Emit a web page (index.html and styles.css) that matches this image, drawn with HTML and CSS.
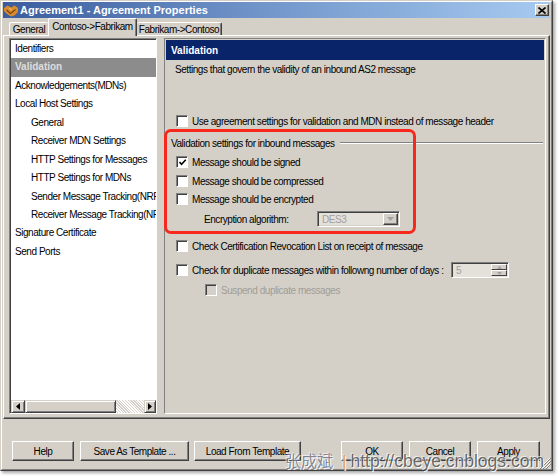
FILE: index.html
```html
<!DOCTYPE html>
<html>
<head>
<meta charset="utf-8">
<link rel="stylesheet" href="styles.css">
</head>
<body>
<div class="screen">
  <div class="window">
    <div class="frame">
      <div class="titlebar">
        <svg class="appicon" viewBox="0 0 14 13" width="14" height="13">
          <path d="M0 4 L3.5 1.5 L7 3.5 L10.5 1.5 L14 4 L14 8 L10.5 11.5 L7 12.5 L3 10 L0 7Z" fill="#d98a2c"/>
          <path d="M2.5 6 L6.5 9.5 L11.5 5.5" stroke="#7a4210" stroke-width="1.2" fill="none"/>
          <path d="M5 4 L8 6" stroke="#f6c27a" stroke-width="1" fill="none"/>
        </svg>
        <span class="title">Agreement1 - Agreement Properties</span>
        <span class="close">
          <svg viewBox="0 0 8 7" width="8" height="7"><path d="M0.5 0.5 L7.5 6.5 M7.5 0.5 L0.5 6.5" stroke="#000" stroke-width="1.6"/></svg>
        </span>
      </div>
      <div class="tabs">
        <div class="tab tab-general">General</div>
        <div class="tab tab-active">Contoso-&gt;Fabrikam</div>
        <div class="tab tab-third">Fabrikam-&gt;Contoso</div>
      </div>
      <div class="page">
        <div class="nav">
          <ul class="navlist">
            <li class="item">Identifiers</li>
            <li class="item selected">Validation</li>
            <li class="item">Acknowledgements(MDNs)</li>
            <li class="item">Local Host Settings</li>
            <li class="item sub">General</li>
            <li class="item sub">Receiver MDN Settings</li>
            <li class="item sub">HTTP Settings for Messages</li>
            <li class="item sub">HTTP Settings for MDNs</li>
            <li class="item sub">Sender Message Tracking(NRR)</li>
            <li class="item sub">Receiver Message Tracking(NRR)</li>
            <li class="item">Signature Certificate</li>
            <li class="item">Send Ports</li>
          </ul>
          <div class="hscroll">
            <span class="sbtn"><svg viewBox="0 0 4 7" width="4" height="7"><path d="M4 0 L0 3.5 L4 7Z" fill="#000"/></svg></span>
            <span class="thumb"></span>
            <span class="track"></span>
            <span class="sbtn"><svg viewBox="0 0 4 7" width="4" height="7"><path d="M0 0 L4 3.5 L0 7Z" fill="#000"/></svg></span>
          </div>
        </div>
        <div class="content">
          <div class="header">Validation</div>
          <div class="desc">Settings that govern the validity of an inbound AS2 message</div>
          <div class="row r-use"><span class="cb"></span><span>Use agreement settings for validation and MDN instead of message header</span></div>
          <div class="group"><span>Validation settings for inbound messages</span><span class="gline"></span></div>
          <div class="row r-signed"><span class="cb"><svg viewBox="0 0 9 9" width="9" height="9"><path d="M1.5 4 L3.5 6.3 L7.8 1.8" stroke="#000" stroke-width="1.6" fill="none"/></svg></span><span>Message should be signed</span></div>
          <div class="row r-comp"><span class="cb"></span><span>Message should be compressed</span></div>
          <div class="row r-enc"><span class="cb"></span><span>Message should be encrypted</span></div>
          <div class="row r-alg"><span class="alglabel">Encryption algorithm:</span>
            <span class="combo"><span class="combotext">DES3</span><span class="dbtn"><svg viewBox="0 0 7 4" width="7" height="4"><path d="M0 0 L7 0 L3.5 4Z" fill="#a0a0a0"/></svg></span></span>
          </div>
          <div class="row r-crl"><span class="cb"></span><span>Check Certification Revocation List on receipt of message</span></div>
          <div class="row r-dup"><span class="cb"></span><span class="duplabel">Check for duplicate messages within followng number of days :</span>
            <span class="spin"><span class="spintext">5</span><span class="spinbtns"><span class="sp"><svg viewBox="0 0 5 3" width="5" height="3"><path d="M0 3 L5 3 L2.5 0Z" fill="#a0a0a0"/></svg></span><span class="sp"><svg viewBox="0 0 5 3" width="5" height="3"><path d="M0 0 L5 0 L2.5 3Z" fill="#a0a0a0"/></svg></span></span></span>
          </div>
          <div class="row r-sus"><span class="cb disabled"></span><span class="distext">Suspend duplicate messages</span></div>
        </div>
      </div>
      <div class="buttons">
        <span class="btn b-help">Help</span>
        <span class="btn b-save">Save As Template ...</span>
        <span class="btn b-load">Load From Template</span>
        <span class="btn b-ok">OK</span>
        <span class="btn b-cancel">Cancel</span>
        <span class="btn b-apply">Apply</span>
      </div>
    </div>
    <svg class="grip" viewBox="0 0 12 12" width="12" height="12">
      <path d="M11 1 L1 11 M11 4 L4 11 M11 7 L7 11" stroke="#fff" stroke-width="1"/>
      <path d="M12 1 L1 12 M12 4 L4 12 M12 7 L7 12" stroke="#808080" stroke-width="1"/>
    </svg>
  </div>
  <div class="annot"></div>
  <div class="watermark"><span class="cjk">张成斌</span><span class="bar">|</span><span class="url">http://cbeye.cnblogs.com</span></div>
</div>
</body>
</html>
```

FILE: styles.css
```css
* { box-sizing: border-box; margin: 0; padding: 0; }
html, body { width: 558px; height: 476px; overflow: hidden; background: #ffffff; }
body {
  font-family: "Liberation Sans", Arial, sans-serif;
  font-size: 10px;
  letter-spacing: -0.45px;
  color: #000;
}
.screen { position: relative; width: 558px; height: 476px; }

.window {
  position: relative;
  width: 553px;
  height: 471px;
  background: #d4d0c8;
  border: 1px solid;
  border-color: #d4d0c8 #404040 #404040 #d4d0c8;
  box-shadow: 2px 2px 3px rgba(0, 0, 0, 0.35);
}
.frame {
  height: 100%;
  border: 1px solid;
  border-color: #fff #808080 #808080 #fff;
  padding: 0 1px;
  display: flex;
  flex-direction: column;
}

/* title bar */
.titlebar {
  height: 16px;
  flex: none;
  background: linear-gradient(to right, #3a5c9e 0%, #6f93c8 45%, #a6caf0 100%);
  display: flex;
  align-items: center;
  padding-left: 1px;
}
.appicon { flex: none; margin-right: 2px; }
.title {
  flex: 1;
  color: #fff;
  font-weight: bold;
  font-size: 11px;
  letter-spacing: 0;
}
.close {
  width: 14px;
  height: 12px;
  margin-right: 1px;
  background: #d4d0c8;
  border: 1px solid;
  border-color: #fff #404040 #404040 #fff;
  box-shadow: inset -1px -1px 0 #808080;
  display: flex;
  align-items: center;
  justify-content: center;
}

/* tabs */
.tabs {
  height: 17px;
  flex: none;
  display: flex;
  align-items: flex-end;
  padding-left: 6px;
  position: relative;
  z-index: 2;
}
.tab {
  height: 13px;
  display: flex;
  align-items: center;
  justify-content: center;
  white-space: nowrap;
  border-top: 1px solid #fff;
  border-left: 1px solid #fff;
  border-right: 1px solid #404040;
  box-shadow: inset -1px 0 0 #808080;
  border-radius: 2px 2px 0 0;
  background: #d4d0c8;
  padding-top: 1px;
}
.tab-general { width: 39px; border-right: none; box-shadow: none; }
.tab-active {
  width: 89px;
  height: 18px;
  margin-bottom: -1px;
  padding-bottom: 3px;
}
.tab-third { width: 85px; border-left: none; }

/* page */
.page {
  height: 384px;
  flex: none;
  border: 1px solid;
  border-color: #fff #404040 #404040 #fff;
  box-shadow: inset -1px -1px 0 #808080;
  padding: 2px 0 0 5px;
  display: flex;
  align-items: flex-start;
}

.nav {
  width: 148px;
  height: 376px;
  flex: none;
  background: #fff;
  border: 1px solid;
  border-color: #808080 #fff #fff #808080;
  box-shadow: inset 1px 1px 0 #404040;
  padding: 1px 0 0 1px;
  display: flex;
  flex-direction: column;
  overflow: hidden;
}
.navlist {
  list-style: none;
  flex: 1;
  overflow: hidden;
}
.item {
  height: 18.45px;
  line-height: 18.45px;
  padding-left: 4px;
  white-space: nowrap;
  overflow: hidden;
}
.item.sub { padding-left: 20px; }
.item.selected {
  background: #8c8c8c;
  color: #dedede;
  font-weight: bold;
  letter-spacing: 0;
}
.hscroll {
  height: 13px;
  flex: none;
  display: flex;
}
.sbtn {
  width: 14px;
  height: 13px;
  flex: none;
  background: #d4d0c8;
  border: 1px solid;
  border-color: #d4d0c8 #404040 #404040 #d4d0c8;
  box-shadow: inset 1px 1px 0 #fff, inset -1px -1px 0 #808080;
  display: flex;
  align-items: center;
  justify-content: center;
}
.sbtn:last-child { width: 12px; }
.thumb {
  width: 91px;
  flex: none;
  background: #d4d0c8;
  border: 1px solid;
  border-color: #d4d0c8 #404040 #404040 #d4d0c8;
  box-shadow: inset 1px 1px 0 #fff, inset -1px -1px 0 #808080;
}
.track {
  flex: 1;
  background-color: #ece9e2;
  background-image: repeating-linear-gradient(45deg, #fff 0 1px, #d4d0c8 1px 2px);
}

/* content */
.content {
  width: 382px;
  height: 376px;
  flex: none;
  margin-left: 7px;
  border: 1px solid;
  border-color: #808080 #fff #fff #808080;
  padding: 1px;
  position: relative;
}
.header {
  height: 20px;
  background: #0a246a;
  color: #fff;
  font-weight: bold;
  font-size: 10px;
  letter-spacing: 0;
  padding-left: 5px;
  display: flex;
  align-items: center;
}
.desc {
  margin-top: 3px;
  height: 14px;
  line-height: 14px;
  padding-left: 9px;
}
.row {
  display: flex;
  align-items: center;
  height: 18px;
  padding-left: 10px;
  white-space: nowrap;
}
.cb {
  width: 12px;
  height: 12px;
  flex: none;
  margin-right: 4px;
  background: #fff;
  border: 1px solid;
  border-color: #808080 #fff #fff #808080;
  box-shadow: inset 1px 1px 0 #404040;
  display: flex;
  align-items: center;
  justify-content: center;
  padding: 1px 0 0 1px;
}
.cb.disabled { background: #d4d0c8; }
.r-use { height: 16px; margin-top: 36px; }
.group {
  margin-top: 7px;
  height: 14px;
  display: flex;
  align-items: center;
  padding-left: 5px;
  white-space: nowrap;
}
.gline {
  flex: 1;
  height: 2px;
  border-top: 1px solid #808080;
  border-bottom: 1px solid #fff;
  margin-left: 5px;
  margin-right: 1px;
}
.r-signed { margin-top: 3px; }
.r-comp { margin-top: 1px; }
.r-alg { margin-top: 2px; padding-left: 38px; }
.alglabel { width: 113px; flex: none; }
.combo {
  width: 83px;
  height: 16px;
  flex: none;
  display: flex;
  background: #d4d0c8;
  border: 1px solid;
  border-color: #808080 #fff #fff #808080;
  box-shadow: inset 1px 1px 0 #404040;
  padding: 1px;
}
.combotext { flex: 1; color: #a0a0a0; padding-left: 3px; line-height: 13px; background: #e4e1da; }
.dbtn {
  width: 15px;
  flex: none;
  background: #d4d0c8;
  border: 1px solid;
  border-color: #fff #404040 #404040 #fff;
  box-shadow: inset -1px -1px 0 #808080;
  display: flex;
  align-items: center;
  justify-content: center;
}
.r-crl { margin-top: 9px; }
.r-dup { margin-top: 6px; }
.duplabel { width: 259px; flex: none; }
.spin {
  width: 58px;
  height: 16px;
  flex: none;
  display: flex;
  background: #e4e1da;
  border: 1px solid;
  border-color: #808080 #fff #fff #808080;
  box-shadow: inset 1px 1px 0 #404040;
  padding: 1px;
}
.spintext { flex: 1; color: #a0a0a0; padding-left: 3px; line-height: 13px; }
.spinbtns { width: 16px; flex: none; display: flex; flex-direction: column; }
.sp {
  flex: 1;
  background: #d4d0c8;
  border: 1px solid;
  border-color: #fff #404040 #404040 #fff;
  display: flex;
  align-items: center;
  justify-content: center;
}
.r-sus { margin-top: 2px; padding-left: 39px; }
.distext { color: #a09d96; }

/* buttons */
.buttons {
  margin-top: 22px;
  height: 20px;
  flex: none;
  display: flex;
  padding-left: 9px;
}
.btn {
  height: 20px;
  flex: none;
  display: flex;
  align-items: center;
  justify-content: center;
  background: #d4d0c8;
  border: 1px solid;
  border-color: #fff #404040 #404040 #fff;
  box-shadow: inset -1px -1px 0 #808080;
}
.b-help { width: 62px; }
.b-save { width: 109px; margin-left: 6px; }
.b-load { width: 107px; margin-left: 5px; }
.b-ok { width: 62px; margin-left: 40px; }
.b-cancel { width: 62px; margin-left: 6px; }
.b-apply { width: 63px; margin-left: 6px; }

.grip { position: absolute; right: 1px; bottom: 1px; }

/* annotation overlays */
.annot {
  position: absolute;
  left: 164px;
  top: 129px;
  width: 252px;
  height: 105px;
  border: 3px solid #f8281c;
  border-radius: 7px;
}
.watermark {
  position: absolute;
  left: 285px;
  top: 450px;
  display: flex;
  align-items: baseline;
  font-family: "Liberation Sans", Arial, sans-serif;
  line-height: 20px;
  letter-spacing: 0;
  white-space: nowrap;
  text-shadow: 1px 1px 0 rgba(255,255,255,0.9), -1px -1px 0 rgba(255,255,255,0.6);
}
.cjk { font-family: "Noto Sans CJK SC", sans-serif; font-size: 16px; color: rgba(90, 90, 110, 0.7); width: 54px; }
.bar { color: #e8a040; font-size: 17px; margin-left: 3px; }
.url { font-size: 17.5px; margin-left: 4px; color: rgba(70, 70, 70, 0.78); }
```
